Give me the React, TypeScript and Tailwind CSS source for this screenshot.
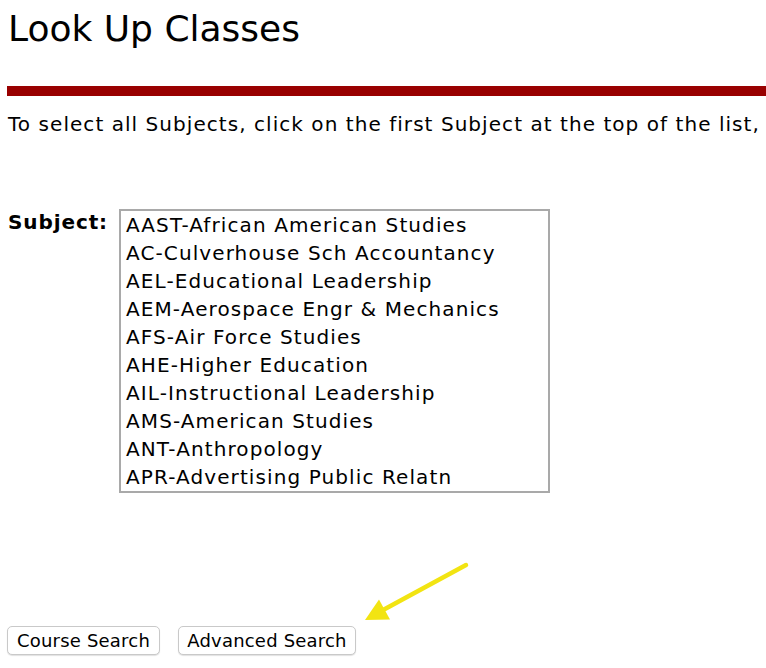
import React from 'react';

const subjects = [
  'AAST-African American Studies',
  'AC-Culverhouse Sch Accountancy',
  'AEL-Educational Leadership',
  'AEM-Aerospace Engr & Mechanics',
  'AFS-Air Force Studies',
  'AHE-Higher Education',
  'AIL-Instructional Leadership',
  'AMS-American Studies',
  'ANT-Anthropology',
  'APR-Advertising Public Relatn',
];

const Arrow = () => (
  // yellow annotation arrow pointing at Advanced Search
  <svg className="absolute left-[350px] top-[555px]" width="125" height="75" viewBox="350 555 125 75">
    <line x1="466" y1="565" x2="384" y2="609.5" stroke="#f2e412" strokeWidth="4.5" strokeLinecap="round" />
    <polygon points="365,620 379,599.5 390,619.5" fill="#f2e412" />
  </svg>
);

export default function App() {
  return (
    <div className="relative h-[668px] overflow-hidden bg-white px-2 pt-[7px] text-black font-['DejaVu_Sans','Verdana',sans-serif]">
      <h1 className="text-[36px] leading-[44px] font-normal">Look Up Classes</h1>

      <div className="mt-[35px] -ml-px -mr-2 h-[10px] bg-[#990000]" />

      <p className="mt-[16px] whitespace-nowrap text-[20px] leading-[24px] tracking-[1.05px]">
        To select all Subjects, click on the first Subject at the top of the list,
      </p>

      <div className="mt-[73px] flex items-start">
        <label className="w-[111px] shrink-0 text-[20px] leading-[24px] font-bold tracking-[0.9px] pt-px">Subject:</label>
        <div className="w-[431px] border-2 border-[#a9a9a9] pl-[5px] text-[20px] leading-[28px] tracking-[1.1px]">
          {subjects.map((s) => (
            <div key={s} className="whitespace-nowrap">{s}</div>
          ))}
        </div>
      </div>

      <div className="mt-[133px] -ml-px flex gap-[18px]">
        <button className="h-[29px] w-[153px] rounded-[5px] border border-[#c9c9c9] bg-white text-[18px] leading-none tracking-[0.2px] shadow-[0_1px_1px_rgba(0,0,0,0.12)]">
          Course Search
        </button>
        <button className="h-[29px] w-[178px] rounded-[5px] border border-[#c9c9c9] bg-white text-[18px] leading-none tracking-[0.2px] shadow-[0_1px_1px_rgba(0,0,0,0.12)]">
          Advanced Search
        </button>
      </div>

      <Arrow />
    </div>
  );
}
